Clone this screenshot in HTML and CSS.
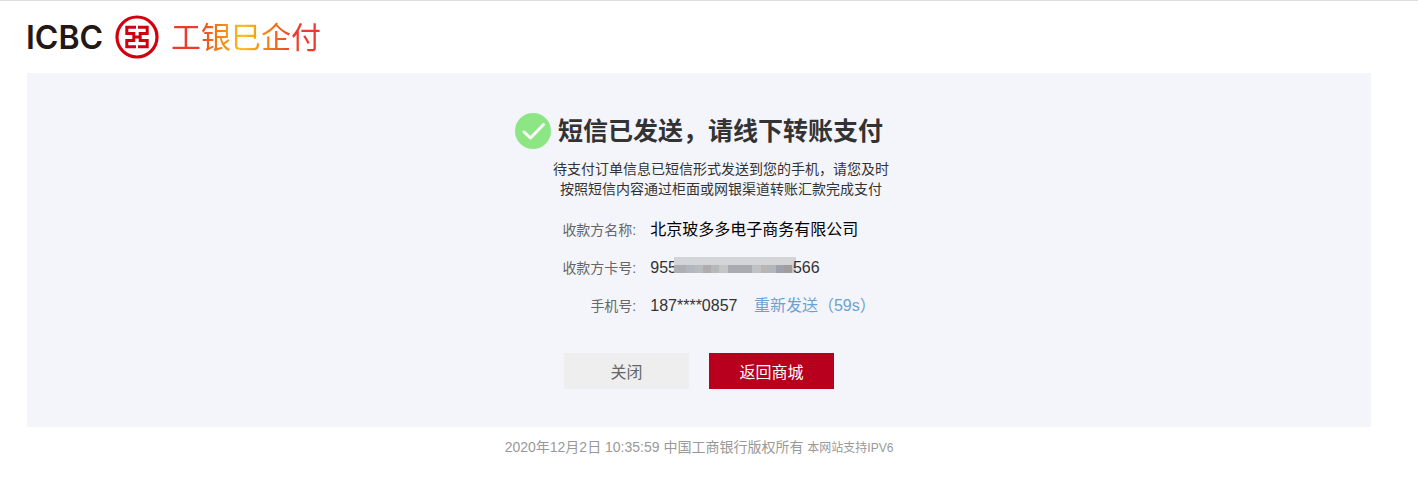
FILE: index.html
```html
<!DOCTYPE html>
<html lang="zh-CN">
<head>
  <meta charset="UTF-8" />
  <meta name="viewport" content="width=device-width, initial-scale=1.0"/>
  <title>工银e企付</title>
  <link rel="stylesheet" href="styles.css">
</head>
<body>

  <!-- Header -->
  <header>
    <span class="brand">ICBC</span>
    <svg class="emblem" viewBox="0 0 44 44" aria-hidden="true">
      <circle cx="22" cy="22" r="20" fill="none" stroke="#d0000f" stroke-width="3.2"/>
      <path d="M21 12.2H11.8V18.6H18.8V25.4H11.8V31.8H21M23 12.2H32.2V18.6H25.2V25.4H32.2V31.8H23M18.8 22H25.2" fill="none" stroke="#d0000f" stroke-width="3"/>
    </svg>
    <span class="product">工银巳企付</span>
  </header>

  <!-- Result -->
  <main>
    <div class="title">
      <svg class="tick" viewBox="0 0 36 36" aria-hidden="true">
        <circle cx="18" cy="18" r="18" fill="#8ce684"/>
        <path d="M9 19L15.5 25L28.5 11.5" fill="none" stroke="#fff" stroke-width="3" stroke-linecap="round" stroke-linejoin="round"/>
      </svg>
      <h1>短信已发送，请线下转账支付</h1>
    </div>
    <p class="tip">待支付订单信息已短信形式发送到您的手机，请您及时<br>按照短信内容通过柜面或网银渠道转账汇款完成支付</p>

    <dl class="info">
      <dt>收款方名称:</dt>
      <dd class="company">北京玻多多电子商务有限公司</dd>
      <dt>收款方卡号:</dt>
      <dd>955<span class="mask"></span>566</dd>
      <dt>手机号:</dt>
      <dd>187****0857 <a class="resend" href="#">重新发送（59s）</a></dd>
    </dl>

    <div class="buttons">
      <button type="button" class="btn">关闭</button>
      <button type="button" class="btn btn-primary">返回商城</button>
    </div>
  </main>

  <footer>2020年12月2日 10:35:59 中国工商银行版权所有 <small>本网站支持IPV6</small></footer>

</body>
</html>
```
FILE: styles.css
```css
/* General */
body {
  margin: 0;
  border-top: 1px solid #ddd;
  background: #fff;
  color: #333;
  font-family: "Liberation Sans", "Noto Sans CJK SC", sans-serif;
}

/* Header */
header {
  display: flex;
  align-items: center;
  height: 72px;
  padding-left: 26px;
}

.brand {
  color: #231815;
  font-family: Inter, sans-serif;
  font-size: 32px;
  font-weight: 600;
}

.emblem {
  width: 44px;
  height: 44px;
  margin: 0 12px;
}

.product {
  padding-bottom: 4px;
  background: linear-gradient(90deg, #ee3a2c 18%, #f08010 32%, #fcc02c 48%, #f08a10 62%, #ee3a2c 82%);
  -webkit-background-clip: text;
  background-clip: text;
  color: transparent;
  font-family: "Noto Sans CJK SC", sans-serif;
  font-size: 30px;
  line-height: 36px;
}

/* Result */
main {
  display: flex;
  flex-direction: column;
  align-items: center;
  margin: 0 47px 0 27px;
  padding: 38px 0;
  background: #f4f5fa;
}

.title {
  display: flex;
  align-items: center;
  gap: 7px;
}

.tick {
  width: 36px;
  height: 36px;
}

h1 {
  margin: 0;
  font-size: 25px;
  line-height: 40px;
}

.tip {
  margin: 8px 0 12px 44px;
  font-size: 14px;
  line-height: 20px;
  text-align: center;
}

.info {
  display: grid;
  grid-template-columns: 74px auto;
  column-gap: 14px;
  margin: 0 0 28px 40px;
  line-height: 38px;
}

dt {
  color: #666;
  font-size: 14px;
  text-align: right;
}

dd {
  margin: 0;
  font-size: 16px;
}

.company {
  color: #000;
}

/* Hidden digits of the card number */
.mask {
  display: inline-block;
  width: 122px;
  height: 16px;
  margin: 0 -3px 8px;
  background: linear-gradient(#d3d4d6 50%, transparent 50%),
    linear-gradient(90deg, #adafb3 0 10%, #b2b7bd 10% 17%, #b9bbbf 17% 24%, #b0acac 24% 30%, #b6b9b8 30% 37%, #c4c5c5 37% 44%, #a9abb1 44% 64%, #c0c1c3 64% 71%, #b8b6b3 71% 77%, #b3b7bb 77% 84%, #9fa2ac 84% 90%, #a09d9f 90% 97%, #c8c8cc 97%);
  vertical-align: middle;
}

.resend {
  margin-left: 12px;
  color: #6ca1d3;
  text-decoration: none;
}

/* Buttons */
.buttons {
  display: flex;
  gap: 20px;
}

.btn {
  width: 125px;
  height: 36px;
  padding: 0;
  border: none;
  background: #eee;
  color: #666;
  font-family: inherit;
  font-size: 16px;
  cursor: pointer;
}

.btn-primary {
  background: #b8001e;
  color: #fff;
}

/* Footer */
footer {
  margin: 0 47px 0 27px;
  padding: 10px 0;
  color: #999;
  font-size: 14px;
  line-height: 20px;
  text-align: center;
}

footer small {
  font-size: 12px;
}
```
